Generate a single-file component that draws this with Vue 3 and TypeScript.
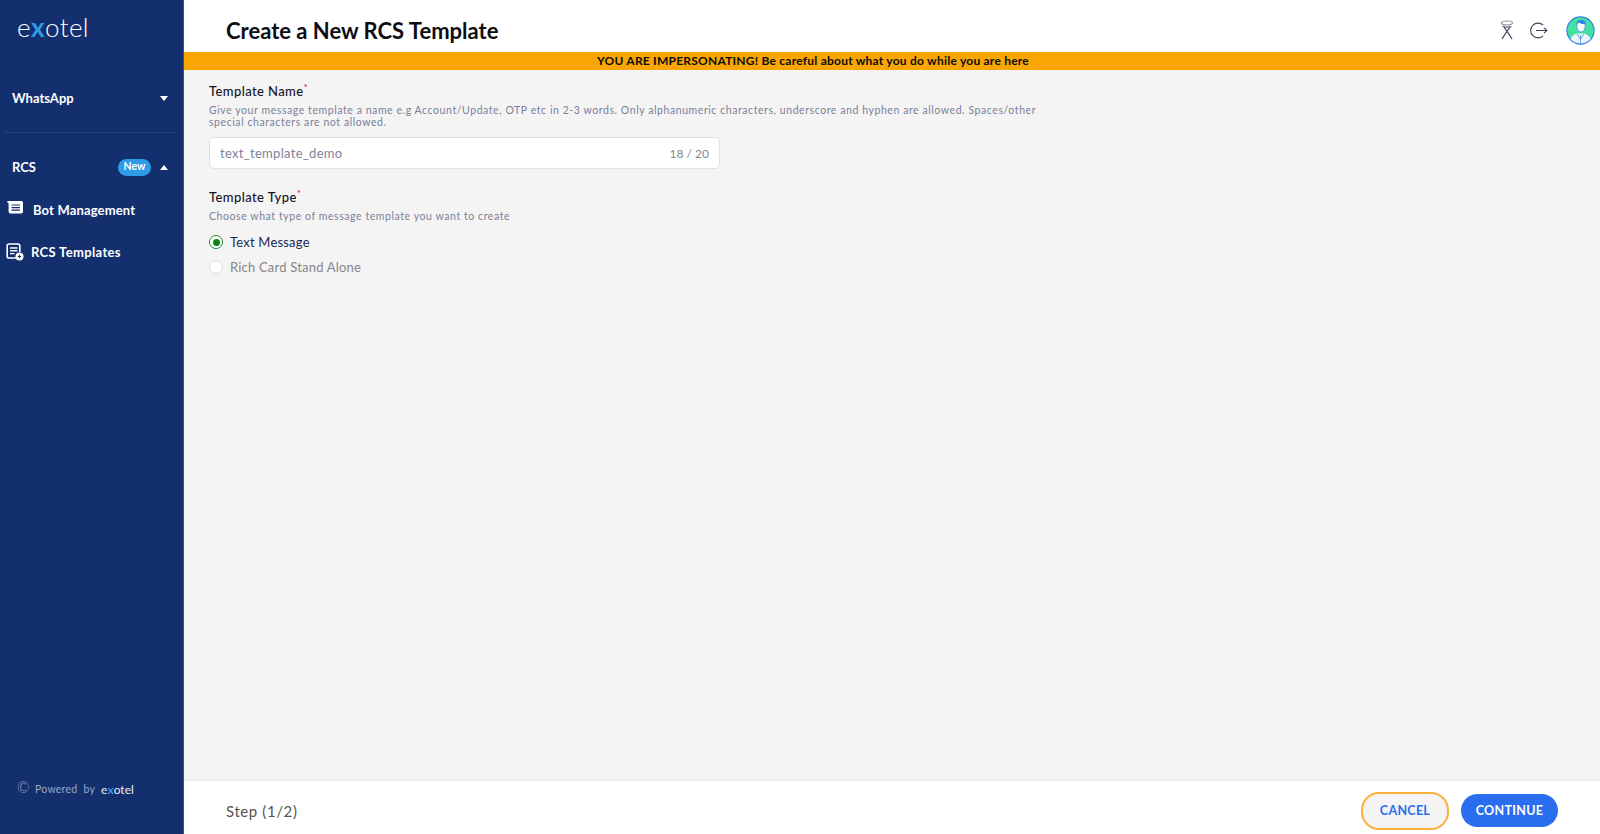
<script setup lang="ts">
const helpName = 'Give your message template a name e.g Account/Update, OTP etc in 2-3 words. Only alphanumeric characters, underscore and hyphen are allowed. Spaces/other special characters are not allowed.'
</script>

<template>
  <div class="page">
    <aside class="side">
      <div class="logo">e<span class="x">x</span>otel</div>
      <div class="menu-row wa">
        <span>WhatsApp</span>
        <span class="tri down"></span>
      </div>
      <div class="rule"></div>
      <div class="menu-row rcs">
        <span>RCS</span>
        <span class="new">New</span>
        <span class="tri up"></span>
      </div>
      <div class="sub bot">
        <svg width="18" height="15" viewBox="0 0 18 15"><path d="M1 2.2 Q1 1 2.2 1 L15.5 1 Q17 1 17 2.5 L17 11 Q17 13.6 14.4 13.6 L5 13.6 Q2.6 13.6 2.6 11 L2.6 3.6 Q2.6 2.6 1 2.2Z" fill="#fff"/><path d="M5.5 5h8.5M5.5 7.6h8.5M5.5 10.2h8.5" stroke="#132f6e" stroke-width="1.2"/></svg>
        <span>Bot Management</span>
      </div>
      <div class="sub tpl">
        <svg width="18" height="18" viewBox="0 0 18 18"><path d="M11 15H3Q1.2 15 1.2 13.2V2.8Q1.2 1 3 1H12Q13.8 1 13.8 2.8V9" fill="none" stroke="#fff" stroke-width="1.6"/><path d="M4 5h7.5M4 7.8h7.5M4 10.6h4.5" stroke="#fff" stroke-width="1.4"/><circle cx="13.5" cy="13.5" r="4" fill="#fff"/><path d="M11.8 13.5h3.4M13.5 11.8v3.4" stroke="#132f6e" stroke-width="1"/></svg>
        <span>RCS Templates</span>
      </div>
      <div class="powered">
        <span class="copy">©</span>
        <span class="pw">Powered</span>
        <span class="pw">by</span>
        <span class="mini">e<span class="x">x</span>otel</span>
      </div>
    </aside>

    <main class="main">
      <header class="top">
        <h1>Create a New RCS Template</h1>
        <div class="top-icons">
          <svg width="16" height="20" viewBox="0 0 16 20"><ellipse cx="8" cy="3" rx="5.5" ry="2" fill="none" stroke="#8a919c" stroke-width="1.2"/><path d="M3.5 6.2Q8 8 12.5 6.2" fill="none" stroke="#5a6270" stroke-width="1.2"/><path d="M5 7 L9.5 13.5 L13 19 M11 7 L6.5 13.5 L3 19" fill="none" stroke="#3c4658" stroke-width="1.3"/></svg>
          <svg width="19" height="19" viewBox="0 0 19 19"><path d="M14.2 4.2A7.4 7.4 0 1 0 14.2 14.8" fill="none" stroke="#3c4658" stroke-width="1.1"/><path d="M7 9.5h11M15 6.8l3 2.7-3 2.7" fill="none" stroke="#3c4658" stroke-width="1.1"/></svg>
          <svg class="avatar" width="29" height="29" viewBox="0 0 29 29"><defs><clipPath id="av"><circle cx="14.5" cy="14.5" r="13.5"/></clipPath></defs><g clip-path="url(#av)"><rect width="29" height="29" fill="#46e0a0"/><path d="M3 29Q4 19 11 17.5L18 17.5Q25 19 26 29Z" fill="#eef5fb"/><path d="M14.5 19v10M11 18l3.5 5 3.5-5" fill="none" stroke="#2f80ed" stroke-width=".7"/><ellipse cx="15" cy="10.5" rx="4.2" ry="5.5" fill="#f3fafd" stroke="#2f80ed" stroke-width=".7"/><path d="M10.5 8Q11 3.5 16 4Q20 4.5 19.5 8Q15 8.5 13 6.5Z" fill="#2f80ed"/></g><circle cx="14.5" cy="14.5" r="13.6" fill="none" stroke="#2f80ed" stroke-width="1.2"/></svg>
        </div>
      </header>
      <div class="banner">YOU ARE IMPERSONATING! Be careful about what you do while you are here</div>

      <section class="body">
        <label class="lbl name-lbl">Template Name<sup>*</sup></label>
        <p class="help two">{{ helpName }}</p>
        <div class="field">
          <span>text_template_demo</span>
          <span class="count">18 / 20</span>
        </div>

        <label class="lbl type-lbl">Template Type<sup>*</sup></label>
        <p class="help one">Choose what type of message template you want to create</p>
        <div class="radio on"><span class="dot"></span>Text Message</div>
        <div class="radio off"><span class="dot"></span>Rich Card Stand Alone</div>
      </section>

      <footer class="foot">
        <span class="step">Step (1/2)</span>
        <div class="btns">
          <button class="cancel">CANCEL</button>
          <button class="cont">CONTINUE</button>
        </div>
      </footer>
    </main>
  </div>
</template>

<style>
body { margin: 0; }
</style>

<style scoped>
.page {
  display: flex;
  width: 1600px;
  height: 834px;
  overflow: hidden;
  font-family: "Lato", "Open Sans", sans-serif;
  background: #f4f4f4;
}
.side {
  width: 184px;
  flex: none;
  display: flex;
  flex-direction: column;
  background: #132f6e;
  color: #fff;
  box-sizing: border-box;
  border-right: 1px solid #3d5590;
}
.logo {
  font-size: 26px;
  font-weight: 300;
  line-height: 30px;
  padding: 12px 0 0 17px;
  letter-spacing: 0.4px;
}
.x { color: #2f9be6; font-weight: 700; }
.menu-row {
  display: flex;
  align-items: center;
  font-size: 13px;
  font-weight: 700;
  padding: 0 15px 0 12px;
}
.wa { justify-content: space-between; margin-top: 46px; height: 20px; }
.rule { height: 1px; background: #26427f; margin: 24px 8px 0 5px; }
.rcs { margin-top: 24px; height: 20px; }
.new {
  margin-left: auto;
  margin-right: 9px;
  width: 33px;
  height: 17px;
  line-height: 15px;
  border-radius: 9px;
  background: #2f9be6;
  font-size: 10.5px;
  text-align: center;
}
.tri { width: 0; height: 0; border-left: 4.5px solid transparent; border-right: 4.5px solid transparent; }
.down { border-top: 5px solid #fff; }
.up { border-bottom: 5px solid #fff; }
.sub {
  display: flex;
  align-items: center;
  font-size: 13px;
  font-weight: 700;
  padding-left: 6px;
  height: 20px;
}
.bot { margin-top: 23px; gap: 9px; letter-spacing: 0.15px; }
.bot svg { margin-top: -5px; }
.tpl { margin-top: 22px; gap: 7px; letter-spacing: 0.35px; }
.powered {
  margin-top: auto;
  margin-bottom: 35px;
  padding-left: 17px;
  display: flex;
  align-items: center;
  font-size: 10.5px;
  color: #9aa8c6;
  height: 20px;
  letter-spacing: 0.25px;
}
.copy { font-size: 15px; width: 18px; margin-top: -4px; font-weight: 300; }
.pw { margin-right: 6px; }
.mini { font-size: 12px; color: #e6ecf7; letter-spacing: 0; }
.main {
  flex: 1;
  min-width: 0;
  display: flex;
  flex-direction: column;
}
.top {
  height: 52px;
  flex: none;
  background: #fff;
  display: flex;
  align-items: center;
  justify-content: space-between;
  padding: 0 5px 0 42px;
  box-sizing: border-box;
}
h1 {
  margin: 0;
  font-size: 22px;
  font-weight: 700;
  color: #0d0d14;
  padding-top: 8px;
}
.top-icons {
  display: flex;
  align-items: center;
  gap: 14px;
  padding-top: 8px;
}
.avatar { margin-left: 4px; }
.banner {
  height: 18px;
  flex: none;
  line-height: 18px;
  background: #f9a602;
  color: #0c0c0c;
  font-size: 12px;
  font-weight: 700;
  letter-spacing: 0.23px;
  text-align: center;
  padding-right: 158px;
  box-sizing: border-box;
}
.body {
  flex: 1;
  display: flex;
  flex-direction: column;
  align-items: flex-start;
  padding: 12px 0 0 25px;
}
.lbl {
  font-size: 13px;
  font-weight: 500;
  color: #15151f;
  line-height: 18px;
  letter-spacing: 0.4px;
}
.lbl sup { color: #e01b24; font-size: 10px; line-height: 0; }
.help {
  margin: 4px 0 0;
  font-size: 10.5px;
  line-height: 12px;
  color: #7b7f99;
  letter-spacing: 0.57px;
}
.two { width: 830px; }
.field {
  margin-top: 9px;
  width: 511px;
  height: 32px;
  box-sizing: border-box;
  padding: 0 10px;
  display: flex;
  align-items: center;
  justify-content: space-between;
  background: #fff;
  border: 1px solid #e2e2e6;
  border-radius: 5px;
  font-size: 13px;
  letter-spacing: 0.3px;
  color: #7f8199;
}
.count { color: #85858c; letter-spacing: 0; font-size: 12px; }
.type-lbl { margin-top: 19px; }
.radio {
  display: flex;
  align-items: center;
  gap: 7px;
  font-size: 13px;
  height: 16px;
  letter-spacing: 0.2px;
}
.on { margin-top: 12px; color: #1b2a52; }
.off { margin-top: 9px; color: #85858c; }
.dot {
  width: 14px;
  height: 14px;
  box-sizing: border-box;
  border-radius: 50%;
  background: #fff;
  border: 1px solid #dcdcdc;
  position: relative;
}
.on .dot { border-color: #1f8a2c; }
.on .dot::after {
  content: "";
  position: absolute;
  inset: 2.5px;
  border-radius: 50%;
  background: #0f7f16;
}
.foot {
  height: 53px;
  flex: none;
  background: #fff;
  display: flex;
  align-items: center;
  justify-content: space-between;
  padding: 6px 42px 0;
  box-sizing: border-box;
  box-shadow: 0 -1px 2px rgba(0, 0, 0, 0.06);
}
.step { font-size: 15px; color: #555; letter-spacing: 0.6px; }
.btns { display: flex; align-items: center; gap: 12px; }
button {
  font-family: inherit;
  font-size: 12.5px;
  font-weight: 700;
  letter-spacing: 0.3px;
  border-radius: 18px;
  padding: 0;
}
.cancel {
  width: 88px;
  height: 38px;
  background: #f4f4f4;
  color: #2a6def;
  border: 2px solid #fbb13c;
}
.cont {
  width: 97px;
  height: 33px;
  background: #2a6def;
  color: #fff;
  border: none;
}
</style>
